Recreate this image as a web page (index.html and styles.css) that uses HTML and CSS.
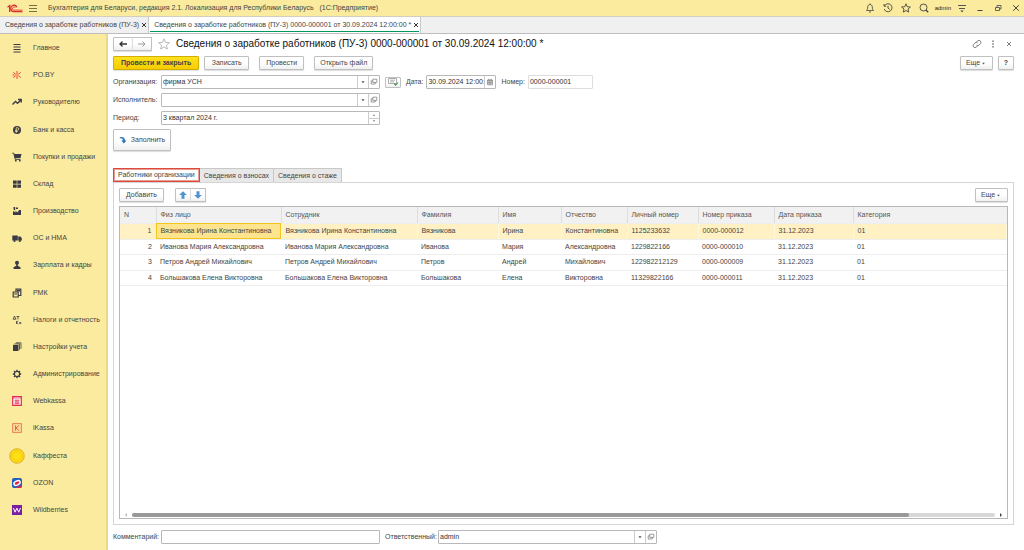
FILE: index.html
```html
<!DOCTYPE html>
<html lang="ru">
<head>
<meta charset="utf-8">
<meta name="viewport" content="width=device-width, initial-scale=1">
<title>Бухгалтерия для Беларуси</title>
<link rel="stylesheet" href="styles.css">
</head>
<body>
<svg class="defs" aria-hidden="true">
  <symbol id="i-open" viewBox="0 0 10 10"><path d="M3.500 1.500h5v4h-5zM3.500 3.500h-2v4h5v-2" fill="none" stroke="#777" stroke-width=".9"/></symbol>
  <symbol id="i-down" viewBox="0 0 10 10"><path d="M3 4h4L5 6.500z" fill="#555"/></symbol>
</svg>
<div class="app">
  <header class="titlebar">
    <svg class="logo" viewBox="0 0 30 16"><g fill="none" stroke="#dc2a2f" stroke-width="2.400"><path d="M1 5.500l4-3v12"/><path d="M18.500 5.500A6 6 0 1 0 13 14h16"/><path d="M15.500 7A2.800 2.800 0 1 0 13 11h16" stroke-width="1.600"/></g></svg>
    <button class="icon-btn" aria-label="Меню"><svg viewBox="0 0 10 10"><path d="M1 2.500h8M1 5.500h8M1 8.500h8" stroke="#77703f" fill="none"/></svg></button>
    <span class="app-name">Бухгалтерия для Беларуси, редакция 2.1. Локализация для Республики Беларусь &nbsp; (1С:Предприятие)</span>
    <div class="tools">
      <button class="icon-btn" aria-label="Уведомления"><svg viewBox="0 0 10 10"><path d="M1.500 7.500c1-1 1.200-2 1.200-3.500C2.700 2.500 3.700 1.500 5 1.500S7.300 2.500 7.300 4c0 1.500.2 2.500 1.200 3.500zM4 9h2M5 .5v1" fill="none" stroke="#555" stroke-width=".9"/></svg></button>
      <button class="icon-btn" aria-label="История"><svg viewBox="0 0 10 10"><path d="M1.500 2.800A4 4 0 1 1 1.200 6M1 1v2.200h2.200M5 2.800V5l1.800 1.500" fill="none" stroke="#444" stroke-width=".9"/></svg></button>
      <button class="icon-btn" aria-label="Избранное"><svg viewBox="0 0 10 10"><path d="M5 .8l1.200 2.900 3.200.3-2.400 2 .7 3.100L5 7.500 2.300 9.100 3 6 .6 4l3.200-.3z" fill="none" stroke="#444" stroke-width=".9"/></svg></button>
      <button class="icon-btn" aria-label="Поиск"><svg viewBox="0 0 10 10"><circle cx="4.500" cy="4.500" r="3.500" fill="none" stroke="#444" stroke-width=".9"/><path d="M7 7l2.200 2.200" stroke="#444" stroke-width="1.300"/></svg></button>
      <span class="user">admin</span>
      <button class="icon-btn" aria-label="Настройки"><svg viewBox="0 0 10 10"><path d="M1 2.500h8M2 5.500h6" stroke="#555" fill="none"/><path d="M3.300 7.500h3.400L5 9.300z" fill="#444"/></svg></button>
      <button class="icon-btn" aria-label="Свернуть"><svg viewBox="0 0 10 10"><path d="M2.500 7.500h5" stroke="#444"/></svg></button>
      <button class="icon-btn" aria-label="Развернуть"><svg viewBox="0 0 10 10"><path d="M2.500 4.500h4v3h-4zM4 4.500v-2h4v3.500H6.500" fill="none" stroke="#555" stroke-width=".9"/></svg></button>
      <button class="icon-btn" aria-label="Закрыть"><svg viewBox="0 0 10 10"><path d="M2.200 2.200l5.600 5.600M7.800 2.200L2.200 7.800" stroke="#444"/></svg></button>
    </div>
  </header>
  <nav class="windows">
    <div class="window-tab">Сведения о заработке работников (ПУ-3)<button class="tab-close" aria-label="Закрыть вкладку"><svg viewBox="0 0 6 6"><path d="M1 1l4 4M5 1L1 5" stroke="#333"/></svg></button></div>
    <div class="window-tab current">Сведения о заработке работников (ПУ-3) 0000-000001 от 30.09.2024 12:00:00 *<button class="tab-close" aria-label="Закрыть вкладку"><svg viewBox="0 0 6 6"><path d="M1 1l4 4M5 1L1 5" stroke="#333"/></svg></button></div>
  </nav>
  <div class="body">
    <nav class="sidebar">
      <a href="#"><svg viewBox="0 0 10 10"><path d="M1.500 1.500h7M1.500 4h7M1.500 6.500h7M1.500 9h7" stroke="#3b3a45" stroke-width="1.200"/></svg>Главное</a>
      <a href="#"><svg viewBox="0 0 10 10"><path d="M5 1v3M5 6v3M1.300 2.500l2.500 1.800M6.200 5.700l2.500 1.800M1.300 7.500l2.500-1.800M6.200 4.300l2.500-1.800M.5 5h2" stroke="#e8453c"/><circle cx="5" cy="5" r=".8" fill="#e8453c"/></svg>PO.BY</a>
      <a href="#"><svg viewBox="0 0 10 10"><path d="M.5 7.500L3.500 4.500l2 1.700L9 3M6 2.500h3.200V5.500" fill="none" stroke="#3b3a45" stroke-width="1.400"/></svg>Руководителю</a>
      <a href="#"><svg viewBox="0 0 10 10"><circle cx="5" cy="5" r="4" fill="#3b3a45"/><path d="M4.200 8V2.700h1.300a1.300 1.300 0 0 1 0 2.600H3.200M3.200 6.500h2.600" fill="none" stroke="#f9e99a" stroke-width=".8"/></svg>Банк и касса</a>
      <a href="#"><svg viewBox="0 0 10 10"><path d="M2 2h7.500l-1 4H3z" fill="#3b3a45"/><path d="M.3 1.200h1.500L3.200 7.300h5.300" fill="none" stroke="#3b3a45"/><circle cx="3.800" cy="8.700" r=".9" fill="#3b3a45"/><circle cx="7.800" cy="8.700" r=".9" fill="#3b3a45"/></svg>Покупки и продажи</a>
      <a href="#"><svg viewBox="0 0 10 10"><path d="M1 1.500h3.700v3.200H1zM5.300 1.500H9v3.200H5.300zM1 5.500h3.700v3.200H1zM5.300 5.500H9v3.200H5.300z" fill="#3b3a45"/></svg>Склад</a>
      <a href="#"><svg viewBox="0 0 10 10"><path d="M1 9V5l2.500 1.500V5L6 6.500V5.800L7 4h2v5zM1.500 1h1.700v3.400L1.500 3.600zM4 1.500h2v1.500H4z" fill="#3b3a45"/></svg>Производство</a>
      <a href="#"><svg viewBox="0 0 10 10"><path d="M.3 2.500h5.500v5H.3zM6.200 3.500h2.300L9.800 5.300v2.200H6.200z" fill="#3b3a45"/><circle cx="2.500" cy="8" r="1.100" fill="#3b3a45"/><circle cx="7.800" cy="8" r="1.100" fill="#3b3a45"/></svg>ОС и НМА</a>
      <a href="#"><svg viewBox="0 0 10 10"><circle cx="5" cy="2.800" r="2" fill="#3b3a45"/><path d="M4.200 4h1.600v1.800L8.500 7.200V9h-7V7.200l2.700-1.400z" fill="#3b3a45"/></svg>Зарплата и кадры</a>
      <a href="#"><svg viewBox="0 0 10 10"><path d="M1.200 4h5v5h-5zM4 4V1.200h4.800V7.500H6.200" fill="none" stroke="#3b3a45" stroke-width="1.200"/><path d="M2.200 5.500h3v1h-3zM5 2h3v1.500H5z" fill="#3b3a45"/></svg>РМК</a>
      <a href="#"><svg viewBox="0 0 10 10"><path d="M1.200 4L2.500 1l1.300 3M.8 4.200h3.500M4.500 1.500h2.800M6 1.500v2.800M4.500 6v3M6.300 6L4.700 7.500 6.300 9M7.300 7l1.900 2M9.200 7L7.300 9" fill="none" stroke="#3b3a45" stroke-width=".8"/></svg>Налоги и отчетность</a>
      <a href="#"><svg viewBox="0 0 10 10"><path d="M1 2.800h5.500V9H1z" fill="#3b3a45"/><path d="M2.500 1.800h5v6M4 .8h5v6" fill="none" stroke="#3b3a45" stroke-width=".8"/></svg>Настройки учета</a>
      <a href="#"><svg viewBox="0 0 10 10"><circle cx="5" cy="5" r="2.600" fill="none" stroke="#3b3a45" stroke-width="1.200"/><path d="M5 .8v1.700M5 7.500v1.700M.8 5h1.700M7.500 5h1.700M2 2l1.100 1.100M6.900 6.900L8 8M2 8l1.100-1.100M6.900 3.100L8 2" stroke="#3b3a45" stroke-width="1.300"/></svg>Администрирование</a>
      <a href="#"><svg viewBox="0 0 10 10"><path d="M.7.700h8.600v8.600H.7z" fill="#fff" stroke="#e2294f" stroke-width="1.200"/><path d="M.7 2h8.600M2.500 4.300h5M2.500 6h5M2.500 7.700h5M4 3.500v5M6 3.500v5" stroke="#e2294f" stroke-width=".7"/></svg>Webkassa</a>
      <a href="#"><svg viewBox="0 0 10 10"><path d="M.6.600h8.800v8.800H.6z" fill="#fbdc97" stroke="#e2664a" stroke-width=".8"/><path d="M3.500 2.500v5M7 2.500L4 5l3 2.500" fill="none" stroke="#e2664a"/></svg>iKassa</a>
      <a href="#"><svg class="coin" viewBox="0 0 16 16"><circle cx="8" cy="8" r="7.200" fill="#ffdf12" stroke="#dfa92a"/><circle cx="8" cy="8" r="5" fill="none" stroke="#f3c414" stroke-width=".8"/></svg>Каффеста</a>
      <a href="#"><svg viewBox="0 0 10 10"><rect width="10" height="10" rx="2" fill="#1f5fbf"/><path d="M3 10L10 7v1a2 2 0 0 1-2 2z" fill="#e8254c"/><ellipse cx="5" cy="5" rx="3.300" ry="2" transform="rotate(-25 5 5)" fill="#e8254c" stroke="#fff" stroke-width="1.500"/></svg>OZON</a>
      <a href="#"><svg viewBox="0 0 10 10"><path d="M0 0h10v10H0z" fill="#7b1fa2"/><path d="M1.500 3l1.500 4.200L4.900 3.200 6.700 7.200 8.500 3" fill="none" stroke="#fff"/></svg>Wildberries</a>
    </nav>
    <main class="form">
      <div class="heading">
        <div class="pair">
          <button class="btn" aria-label="Назад"><svg viewBox="0 0 10 10"><path d="M9 5H2M4.500 2.500L2 5l2.500 2.500" fill="none" stroke="#333" stroke-width="1.300"/></svg></button><button class="btn" aria-label="Вперед"><svg viewBox="0 0 10 10"><path d="M1 5H8M5.500 2.500L8 5 5.500 7.500" fill="none" stroke="#999"/></svg></button>
        </div>
        <svg class="star" viewBox="0 0 12 12"><path d="M6 .8l1.500 3.600 3.900.3-3 2.500 1 3.800L6 9l-3.400 2 1-3.800-3-2.500 3.900-.3z" fill="none" stroke="#aaa" stroke-width=".8"/></svg>
        <h1>Сведения о заработке работников (ПУ-3) 0000-000001 от 30.09.2024 12:00:00 *</h1>
        <div class="form-tools">
          <button class="icon-btn" aria-label="Ссылка"><svg viewBox="0 0 10 10"><path d="M4.200 3.500l1.500-1.700a2 2 0 0 1 2.800 2.800L7 6.100a1.800 1.800 0 0 1-2.500 0M5.800 6.500L4.300 8.200a2 2 0 0 1-2.800-2.800L3 3.900a1.800 1.800 0 0 1 2.500 0" fill="none" stroke="#666" stroke-width=".8"/></svg></button>
          <button class="icon-btn" aria-label="Действия"><svg viewBox="0 0 10 10"><path d="M5 1.500v1.600M5 4.200v1.600M5 6.900v1.600" stroke="#777" stroke-width="1.500"/></svg></button>
          <button class="icon-btn" aria-label="Закрыть форму"><svg viewBox="0 0 10 10"><path d="M3 3l4 4M7 3L3 7" stroke="#777"/></svg></button>
        </div>
      </div>
      <div class="commands">
        <button class="btn primary">Провести и закрыть</button>
        <button class="btn">Записать</button>
        <button class="btn gap">Провести</button>
        <button class="btn gap">Открыть файл</button>
        <button class="btn more push">Еще<svg viewBox="0 0 10 10"><use href="#i-down"/></svg></button>
        <button class="btn help">?</button>
      </div>
      <div class="row">
        <label class="lead" for="org">Организация:</label>
        <div class="field wide"><input id="org" type="text" value="фирма УСН"><button aria-label="Выбрать"><svg viewBox="0 0 10 10"><use href="#i-down"/></svg></button><button aria-label="Открыть"><svg viewBox="0 0 10 10"><use href="#i-open"/></svg></button></div>
        <button class="btn sheet" aria-label="Реквизиты"><svg viewBox="0 0 12 10"><path d="M1.500 1.500h8v5h-8zM3 3.200h5M3 4.900h4" fill="none" stroke="#999" stroke-width=".8"/><path d="M7 6.500l1.500 1.700L11 5.500" fill="none" stroke="#3f8f4d" stroke-width="1.100"/></svg></button>
        <label for="date">Дата:</label>
        <div class="field date"><input id="date" type="text" value="30.09.2024 12:00:"><button aria-label="Календарь"><svg viewBox="0 0 10 10"><path d="M2 2.500h6v6H2zM2 3.500h6M3.500 1v2M6.500 1v2M4 4v4M6 4v4M2 6h6" fill="none" stroke="#666" stroke-width=".8"/></svg></button></div>
        <label for="num">Номер:</label>
        <div class="field num"><input id="num" type="text" value="0000-000001"></div>
      </div>
      <div class="row">
        <label class="lead" for="exec">Исполнитель:</label>
        <div class="field wide"><input id="exec" type="text"><button aria-label="Выбрать"><svg viewBox="0 0 10 10"><use href="#i-down"/></svg></button><button aria-label="Открыть"><svg viewBox="0 0 10 10"><use href="#i-open"/></svg></button></div>
      </div>
      <div class="row">
        <label class="lead" for="period">Период:</label>
        <div class="field wide"><input id="period" type="text" value="3 квартал 2024 г."><div class="spin"><button aria-label="Больше"><svg viewBox="0 0 10 10"><path d="M2 7h6L5 3z" fill="#777"/></svg></button><button aria-label="Меньше"><svg viewBox="0 0 10 10"><path d="M2 3h6L5 7z" fill="#777"/></svg></button></div></div>
      </div>
      <button class="btn fill"><svg viewBox="0 0 10 10"><path d="M1 1.500c4-1 6.500.5 6.500 4H9.500L6 9.300 2.800 5.500h2C4.800 3.500 3.500 2.300 1 3z" fill="#2f78b7"/></svg>Заполнить</button>
      <div class="tabs" role="tablist">
        <button class="tab selected" role="tab" aria-selected="true">Работники организации</button>
        <button class="tab" role="tab">Сведения о взносах</button>
        <button class="tab" role="tab">Сведения о стаже</button>
      </div>
      <section class="panel">
        <div class="toolbar">
          <button class="btn add">Добавить</button>
          <div class="pair arrows">
            <button class="btn" aria-label="Вверх"><svg viewBox="0 0 10 10"><path d="M5 1.200L8.800 5H6.500v3.800h-3V5H1.200z" fill="#4f93d0"/></svg></button><button class="btn" aria-label="Вниз"><svg viewBox="0 0 10 10"><path d="M5 8.800L8.800 5H6.500V1.200h-3V5H1.200z" fill="#4f93d0"/></svg></button>
          </div>
          <button class="btn more push">Еще<svg viewBox="0 0 10 10"><use href="#i-down"/></svg></button>
        </div>
        <div class="grid">
          <table>
            <colgroup><col class="c-n"><col class="c-fiz"><col class="c-emp"><col class="c-last"><col class="c-first"><col class="c-mid"><col class="c-id"><col class="c-order"><col class="c-date"><col></colgroup>
            <thead><tr><th>N</th><th>Физ лицо</th><th>Сотрудник</th><th>Фамилия</th><th>Имя</th><th>Отчество</th><th>Личный номер</th><th>Номер приказа</th><th>Дата приказа</th><th>Категория</th></tr></thead>
            <tbody>
              <tr class="active"><td>1</td><td class="cell">Вязникова Ирина Константиновна</td><td>Вязникова Ирина Константиновна</td><td>Вязникова</td><td>Ирина</td><td>Константиновна</td><td>1125233632</td><td>0000-000012</td><td>31.12.2023</td><td>01</td></tr>
              <tr><td>2</td><td>Иванова Мария Александровна</td><td>Иванова Мария Александровна</td><td>Иванова</td><td>Мария</td><td>Александровна</td><td>1229822166</td><td>0000-000010</td><td>31.12.2023</td><td>01</td></tr>
              <tr><td>3</td><td>Петров Андрей Михайлович</td><td>Петров Андрей Михайлович</td><td>Петров</td><td>Андрей</td><td>Михайлович</td><td>122982212129</td><td>0000-000009</td><td>31.12.2023</td><td>01</td></tr>
              <tr><td>4</td><td>Большакова Елена Викторовна</td><td>Большакова Елена Викторовна</td><td>Большакова</td><td>Елена</td><td>Викторовна</td><td>11329822166</td><td>0000-000011</td><td>31.12.2023</td><td>01</td></tr>
            </tbody>
          </table>
          <div class="scroll">
            <svg viewBox="0 0 4 6"><path d="M3 1v4L1 3z" fill="#bbb"/></svg>
            <div class="track"><div class="thumb"></div></div>
            <svg viewBox="0 0 4 6"><path d="M1 1v4l2-2z" fill="#444"/></svg>
          </div>
        </div>
      </section>
      <div class="row footer">
        <label class="lead" for="comment">Комментарий:</label>
        <div class="field wide"><input id="comment" type="text"></div>
        <label class="resp" for="resp">Ответственный:</label>
        <div class="field wide"><input id="resp" type="text" value="admin"><button aria-label="Выбрать"><svg viewBox="0 0 10 10"><use href="#i-down"/></svg></button><button aria-label="Открыть"><svg viewBox="0 0 10 10"><use href="#i-open"/></svg></button></div>
      </div>
    </main>
  </div>
</div>
</body>
</html>
```

FILE: styles.css
```css
* { box-sizing: border-box; }
body {
  margin: 0;
  font: 7px/10px "Liberation Sans", Arial, sans-serif;
  color: #444;
  background: #fff;
}
button, input { font: inherit; color: inherit; margin: 0; padding: 0; }
button { border: 0; background: none; }
svg { display: block; flex: none; width: 10px; height: 10px; }
.defs { position: absolute; width: 0; height: 0; }
.app { display: flex; flex-direction: column; min-height: 100vh; }

.titlebar {
  display: flex;
  align-items: center;
  height: 16px;
  padding: 0 3px 0 7px;
  background: #faeb9e;
}
.logo { width: 16px; height: 9px; margin-right: 5px; }
.app-name { margin-left: 10px; white-space: nowrap; }
.tools { display: flex; align-items: center; gap: 8px; margin-left: auto; }
.user { margin: 0 -2px; font-size: 6px; color: #222; }

.windows {
  display: flex;
  height: 18px;
  background: #f0f0f0;
  border-top: 1px solid #d2cfc0;
  border-bottom: 1px solid #bdbdbd;
}
.window-tab {
  display: flex;
  align-items: center;
  gap: 2px;
  padding: 0 1px 0 5px;
  border-right: 1px solid #c8c8c8;
  white-space: nowrap;
}
.window-tab.current {
  background: linear-gradient(#00985f, #00985f) center bottom 1px / calc(100% - 2px) 1px no-repeat #fff;
}
.tab-close svg { width: 6px; height: 6px; }

.body { display: flex; flex: 1; }
.sidebar {
  display: flex;
  flex-direction: column;
  justify-content: space-between;
  flex: none;
  width: 108px;
  padding: 7px 0 33px;
  background: #faeb9e;
  border-right: 2px solid #e8d98b;
}
.sidebar a {
  display: grid;
  grid-template: 14px / 33px 1fr;
  align-items: center;
  height: 14px;
  color: #444;
  text-decoration: none;
  white-space: nowrap;
}
.sidebar svg { justify-self: center; }
.sidebar .coin { width: 16px; height: 16px; }

.form {
  display: flex;
  flex-direction: column;
  flex: 1;
  min-width: 0;
  padding: 3px 10px 6px 5px;
}
.btn {
  display: flex;
  align-items: center;
  justify-content: center;
  height: 14px;
  border: 1px solid #c0c0c0;
  border-radius: 1px;
  background: linear-gradient(#fff 50%, #f0f0f0);
  box-shadow: 0 1px 1px #ddd;
  white-space: nowrap;
}
.pair { display: flex; }
.pair .btn { width: 20px; }
.pair .btn + .btn { border-left-color: #ddd; margin-left: -1px; }
.arrows .btn { width: 16px; }

.heading { display: flex; align-items: center; height: 14px; }
.star { width: 12px; height: 12px; margin: 0 6px; }
h1 { margin: 0; font-size: 10px; font-weight: 400; line-height: 14px; color: #111; white-space: nowrap; }
.form-tools { display: flex; gap: 6px; margin-left: auto; }

.commands { display: flex; gap: 5px; margin-top: 5px; }
.commands .btn { min-width: 45px; padding: 0 5px; }
.commands .primary {
  padding: 0 7px;
  background: linear-gradient(#ffe11f, #f5cd00);
  border-color: #d1ae00;
  font-weight: 700;
}
.commands .gap { margin-left: 5px; }
.commands .more, .more { min-width: 33px; width: 33px; padding: 0; }
.more svg { width: 7px; height: 7px; }
.push { margin-left: auto; }
.commands .help { min-width: 16px; padding: 0; font-weight: 700; }

.row { display: flex; align-items: center; height: 14px; margin-top: 4px; }
.commands + .row { margin-top: 5px; }
.lead { flex: none; width: 48px; }
.field {
  display: flex;
  height: 14px;
  border: 1px solid #b8b8b8;
  border-radius: 1px;
  background: #fff;
}
.field input {
  flex: 1;
  min-width: 0;
  width: 100%;
  padding-left: 1px;
  border: 0;
  outline: 0;
  background: none;
  color: #333;
}
.field > button {
  display: flex;
  align-items: center;
  justify-content: center;
  width: 11px;
  border-left: 1px solid #ccc;
}
.field button svg { width: 8px; height: 8px; }
.wide { width: 219px; }
.date { width: 70px; margin: 0 5px 0 3px; }
.num { width: 65px; margin-left: 3px; border-color: #ddd; }
.sheet { width: 16px; height: 11px; margin: 0 5px; box-shadow: none; }
.sheet svg { width: 12px; }
.spin { display: flex; flex-direction: column; width: 11px; border-left: 1px solid #ccc; }
.spin button { display: flex; align-items: center; justify-content: center; flex: 1; }
.spin button + button { border-top: 1px solid #ccc; }
.spin button svg { width: 4px; height: 4px; }

.fill { gap: 4px; width: 58px; height: 22px; margin-top: 4px; }
.fill svg { width: 8px; height: 8px; }

.tabs { display: flex; margin-top: 17px; }
.tab {
  height: 14px;
  padding: 0 4px;
  border: 1px solid #c8c8c8;
  border-left: 0;
  border-bottom: 0;
  background: #e8e8e8;
}
.tab.selected { border: 1px solid #dd4b3c; background: #fff; outline: 1px solid #ea9a90; outline-offset: -2px; }

.panel {
  display: flex;
  flex-direction: column;
  flex: 1;
  padding: 5px;
  border: 1px solid #d5d5d5;
}
.toolbar { display: flex; gap: 11px; margin-bottom: 4px; }
.add { width: 45px; }
.grid {
  display: flex;
  flex-direction: column;
  flex: 1;
  border: 1px solid #b8b8b8;
}
table { width: 100%; border-collapse: collapse; table-layout: fixed; }
.c-n { width: 36px; }
.c-fiz { width: 125px; }
.c-emp { width: 136px; }
.c-last { width: 81px; }
.c-first { width: 63px; }
.c-mid { width: 66px; }
.c-id { width: 71px; }
.c-order { width: 76px; }
.c-date { width: 79px; }
th, td {
  height: 15px;
  padding: 0 4px;
  font-weight: 400;
  text-align: left;
  white-space: nowrap;
  border-bottom: 1px solid #eee;
}
th { height: 16px; background: #f1f1f1; border-right: 1px solid #ddd; color: #555; }
th:last-child { border-right: 0; }
tbody tr:nth-child(odd) td { height: 16px; }
td:first-child { text-align: right; }
.active td { background: #fff1c4; border-right: 1px solid #fff8e0; }
.active .cell { background: #fee48e; outline: 1px solid #f3c61c; outline-offset: -1px; }
.scroll { display: flex; align-items: center; gap: 4px; margin-top: auto; padding: 0 4px; height: 6px; }
.scroll svg { width: 4px; height: 6px; }
.track { flex: 1; height: 4px; border-radius: 2px; background: #d8d8d8; }
.thumb { width: 90%; height: 4px; border-radius: 2px; background: #999; }
.footer { margin-top: 5px; }
.resp { width: 53px; margin-left: 5px; }
```
